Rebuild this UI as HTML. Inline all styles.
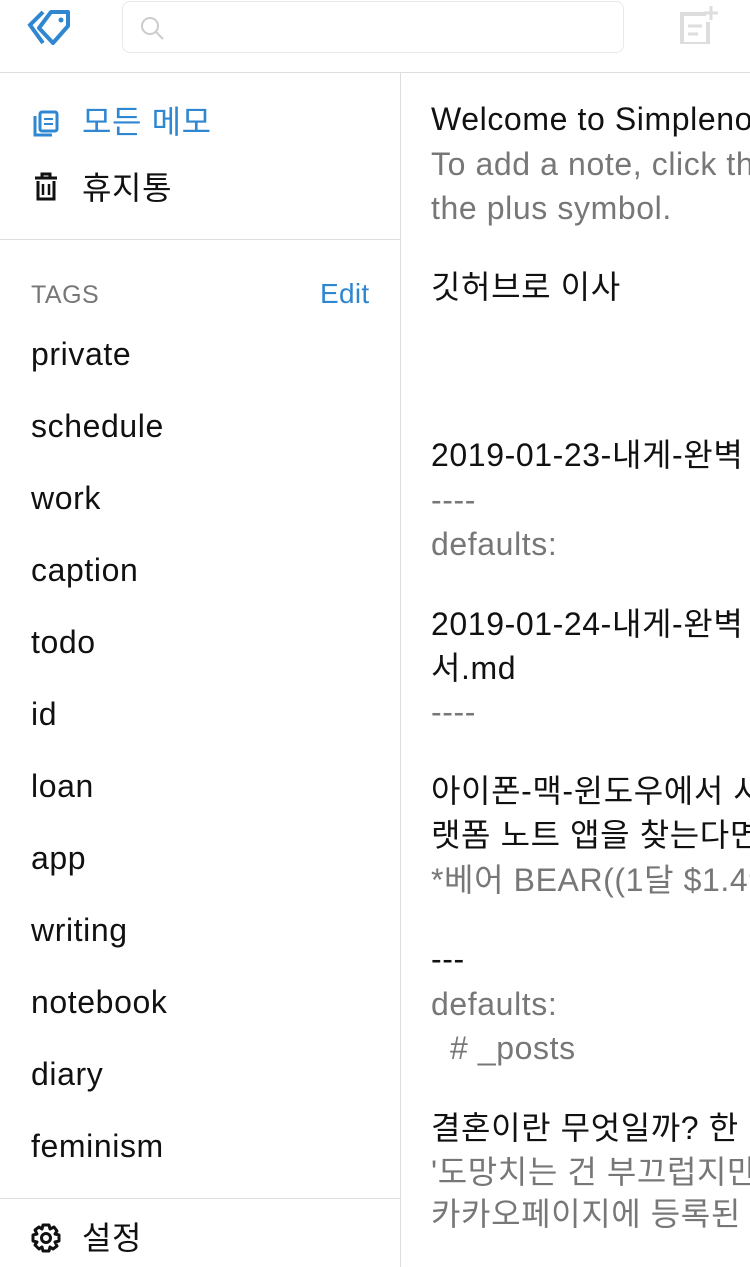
<!DOCTYPE html>
<html><head><meta charset="utf-8"><style>
*{margin:0;padding:0;box-sizing:border-box}
body{width:750px;height:1267px;overflow:hidden;background:#fff;position:relative;font-family:"Liberation Sans","Noto Sans CJK KR",sans-serif}
.t{position:absolute;font-size:32px;line-height:36px;letter-spacing:0.6px;white-space:nowrap;color:#111}
.g{color:#777}
.b{color:#2f87d2}
.hl{position:absolute;background:#ddd}
</style></head><body>
<svg style="position:absolute;left:26px;top:8px" width="48" height="40" viewBox="0 0 48 40">
<path d="M17 4 L4 17 L17 35" fill="none" stroke="#2f87d2" stroke-width="4"/>
<path d="M25 4 L42 4 L42 18 L27 35 L13 20 Z" fill="none" stroke="#2f87d2" stroke-width="4" stroke-linejoin="round"/>
<circle cx="35" cy="12" r="2.5" fill="#2f87d2"/>
</svg>
<div style="position:absolute;left:122px;top:1px;width:502px;height:52px;border:1px solid #e8e8e8;border-radius:8px"></div>
<svg style="position:absolute;left:138px;top:14px" width="28" height="28" viewBox="0 0 28 28"><circle cx="12" cy="12" r="8" fill="none" stroke="#ccc" stroke-width="2"/><path d="M18 18 L25 25" stroke="#ccc" stroke-width="2"/></svg>
<svg style="position:absolute;left:678px;top:4px" width="44" height="40" viewBox="0 0 44 40">
<path d="M28 10 H4 V40 H30 V18" fill="none" stroke="#ddd" stroke-width="4"/>
<path d="M10 22 H24 M10 30 H20" stroke="#ddd" stroke-width="3"/>
<path d="M33 2 V16 M26 9 H40" stroke="#ddd" stroke-width="3"/>
</svg>
<div class="hl" style="left:0;top:72px;width:750px;height:1px"></div>
<div class="hl" style="left:400px;top:72px;width:1px;height:1195px"></div>
<svg style="position:absolute;left:32px;top:110px" width="28" height="28" viewBox="0 0 28 28">
<path d="M3 6 V25 H20" fill="none" stroke="#2f87d2" stroke-width="3"/>
<rect x="8" y="2" width="17" height="19" rx="2" fill="none" stroke="#2f87d2" stroke-width="3"/>
<path d="M12 9 H21 M12 14 H21" stroke="#2f87d2" stroke-width="2"/></svg>
<div class="t b" style="left:82px;top:104px">모든 메모</div>
<svg style="position:absolute;left:33px;top:172px" width="26" height="30" viewBox="0 0 26 30">
<path d="M2 6 H24 M9 6 V2 H17 V6" fill="none" stroke="#111" stroke-width="3"/>
<path d="M5 9 V27 H21 V9" fill="none" stroke="#111" stroke-width="3"/>
<path d="M10 12 V23 M16 12 V23" stroke="#111" stroke-width="2.5"/></svg>
<div class="t" style="left:82px;top:170px">휴지통</div>
<div class="hl" style="left:0;top:239px;width:400px;height:1px"></div>
<div class="t g" style="left:31px;top:281px;font-size:25px;line-height:28px;letter-spacing:0.5px">TAGS</div>
<div class="t b" style="left:320px;top:279px;font-size:28px;line-height:30px;letter-spacing:0.3px">Edit</div>
<div class="t" style="left:31px;top:336px">private</div>
<div class="t" style="left:31px;top:408px">schedule</div>
<div class="t" style="left:31px;top:480px">work</div>
<div class="t" style="left:31px;top:552px">caption</div>
<div class="t" style="left:31px;top:624px">todo</div>
<div class="t" style="left:31px;top:696px">id</div>
<div class="t" style="left:31px;top:768px">loan</div>
<div class="t" style="left:31px;top:840px">app</div>
<div class="t" style="left:31px;top:912px">writing</div>
<div class="t" style="left:31px;top:984px">notebook</div>
<div class="t" style="left:31px;top:1056px">diary</div>
<div class="t" style="left:31px;top:1128px">feminism</div>
<div class="hl" style="left:0;top:1198px;width:400px;height:1px"></div>
<svg style="position:absolute;left:31px;top:1223px" width="30" height="30" viewBox="0 0 30 30">
<path d="M12 2 H18 L19 6 L23 4 L26 8 L24 11 L28 12 V18 L24 19 L26 23 L22 26 L19 24 L18 28 H12 L11 24 L8 26 L4 22 L6 19 L2 18 V12 L6 11 L4 7 L8 4 L11 6 Z" fill="none" stroke="#111" stroke-width="3" stroke-linejoin="round"/>
<circle cx="15" cy="15" r="4.5" fill="none" stroke="#111" stroke-width="3"/></svg>
<div class="t" style="left:82px;top:1220px">설정</div>
<div class="t" style="left:431px;top:101px">Welcome to Simplenote</div>
<div class="t g" style="left:431px;top:146px">To add a note, click the</div>
<div class="t g" style="left:431px;top:190px">the plus symbol.</div>
<div class="t" style="left:431px;top:269px">깃허브로 이사</div>
<div class="t" style="left:431px;top:437px">2019-01-23-내게-완벽</div>
<div class="t g" style="left:431px;top:482px">----</div>
<div class="t g" style="left:431px;top:526px">defaults:</div>
<div class="t" style="left:431px;top:606px">2019-01-24-내게-완벽</div>
<div class="t" style="left:431px;top:650px">서.md</div>
<div class="t g" style="left:431px;top:694px">----</div>
<div class="t" style="left:431px;top:773px">아이폰-맥-윈도우에서 사</div>
<div class="t" style="left:431px;top:817px">랫폼 노트 앱을 찾는다면</div>
<div class="t g" style="left:431px;top:862px">*베어 BEAR((1달 $1.49</div>
<div class="t" style="left:431px;top:941px">---</div>
<div class="t g" style="left:431px;top:986px">defaults:</div>
<div class="t g" style="left:431px;top:1030px">&nbsp;&nbsp;# _posts</div>
<div class="t" style="left:431px;top:1110px">결혼이란 무엇일까? 한 단</div>
<div class="t g" style="left:431px;top:1154px">'도망치는 건 부끄럽지만</div>
<div class="t g" style="left:431px;top:1196px">카카오페이지에 등록된 이</div>
</body></html>
